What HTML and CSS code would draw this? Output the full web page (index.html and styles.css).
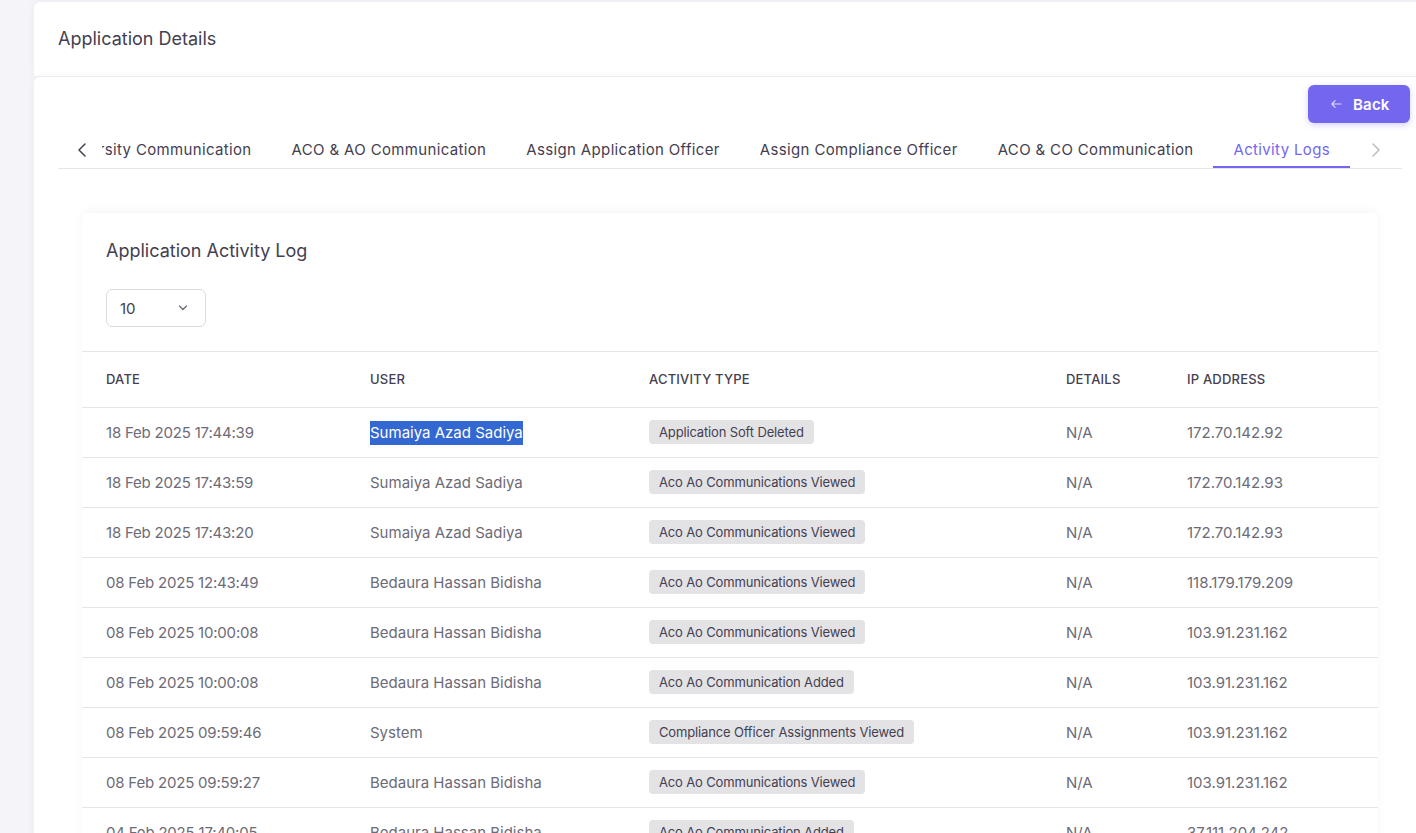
FILE: index.html
```html
<!DOCTYPE html>
<html lang="en">
<head>
<meta charset="utf-8">
<title>Application Details</title>
<link rel="stylesheet" href="styles.css">
</head>
<body>
<div class="page">
  <div class="card head-card">
    <h1 class="page-title">Application Details</h1>
  </div>
  <div class="card main-card">
    <div class="actions">
      <button class="btn-back" type="button">
        <svg class="back-ico" viewBox="0 0 14 12" width="14" height="12"><path d="M13 6H2M6 2L2 6l4 4" fill="none" stroke="currentColor" stroke-width="1.4" stroke-linecap="round" stroke-linejoin="round"/></svg>
        <span>Back</span>
      </button>
    </div>
    <div class="tabs">
      <button class="tab-arrow" type="button" aria-label="Previous">
        <svg viewBox="0 0 10 16" width="10" height="16"><path d="M8 2L2 8l6 6" fill="none" stroke="currentColor" stroke-width="1.5" stroke-linecap="round" stroke-linejoin="round"/></svg>
      </button>
      <div class="tab-scroll">
        <div class="tab">University Communication</div>
        <div class="tab">ACO &amp; AO Communication</div>
        <div class="tab">Assign Application Officer</div>
        <div class="tab">Assign Compliance Officer</div>
        <div class="tab">ACO &amp; CO Communication</div>
        <div class="tab active">Activity Logs</div>
      </div>
      <button class="tab-arrow disabled" type="button" aria-label="Next">
        <svg viewBox="0 0 10 16" width="10" height="16"><path d="M2 2l6 6-6 6" fill="none" stroke="currentColor" stroke-width="1.5" stroke-linecap="round" stroke-linejoin="round"/></svg>
      </button>
    </div>
    <div class="log-card">
      <h2 class="log-title">Application Activity Log</h2>
      <div class="select">
        <span>10</span>
        <svg viewBox="0 0 10 6" width="10" height="6"><path d="M1.5 1l3.5 3.5L8.5 1" fill="none" stroke="currentColor" stroke-width="1.3" stroke-linecap="round" stroke-linejoin="round"/></svg>
      </div>
      <table class="log-table">
        <thead>
          <tr><th class="c-date">Date</th><th class="c-user">User</th><th class="c-type">Activity Type</th><th class="c-det">Details</th><th class="c-ip">IP Address</th></tr>
        </thead>
        <tbody>
          <tr><td class="num">18 Feb 2025 17:44:39</td><td><span class="sel">Sumaiya Azad Sadiya</span></td><td><span class="badge">Application Soft Deleted</span></td><td>N/A</td><td>172.70.142.92</td></tr>
          <tr><td class="num">18 Feb 2025 17:43:59</td><td>Sumaiya Azad Sadiya</td><td><span class="badge">Aco Ao Communications Viewed</span></td><td>N/A</td><td>172.70.142.93</td></tr>
          <tr><td class="num">18 Feb 2025 17:43:20</td><td>Sumaiya Azad Sadiya</td><td><span class="badge">Aco Ao Communications Viewed</span></td><td>N/A</td><td>172.70.142.93</td></tr>
          <tr><td class="num">08 Feb 2025 12:43:49</td><td>Bedaura Hassan Bidisha</td><td><span class="badge">Aco Ao Communications Viewed</span></td><td>N/A</td><td>118.179.179.209</td></tr>
          <tr><td class="num">08 Feb 2025 10:00:08</td><td>Bedaura Hassan Bidisha</td><td><span class="badge">Aco Ao Communications Viewed</span></td><td>N/A</td><td>103.91.231.162</td></tr>
          <tr><td class="num">08 Feb 2025 10:00:08</td><td>Bedaura Hassan Bidisha</td><td><span class="badge">Aco Ao Communication Added</span></td><td>N/A</td><td>103.91.231.162</td></tr>
          <tr><td class="num">08 Feb 2025 09:59:46</td><td>System</td><td><span class="badge">Compliance Officer Assignments Viewed</span></td><td>N/A</td><td>103.91.231.162</td></tr>
          <tr><td class="num">08 Feb 2025 09:59:27</td><td>Bedaura Hassan Bidisha</td><td><span class="badge">Aco Ao Communications Viewed</span></td><td>N/A</td><td>103.91.231.162</td></tr>
          <tr><td class="num">04 Feb 2025 17:40:05</td><td>Bedaura Hassan Bidisha</td><td><span class="badge">Aco Ao Communication Added</span></td><td>N/A</td><td>37.111.204.242</td></tr>
        </tbody>
      </table>
    </div>
  </div>
</div>
</body>
</html>
```
FILE: styles.css
```css
* { box-sizing: border-box; }
html, body { margin: 0; height: 100%; overflow: hidden; }
body {
  background: #f5f5f9;
  font-family: "Inter", "Noto Sans", sans-serif;
  color: #444050;
}
.page {
  padding: 2px 0 0 34px;
  width: 1426px;
}
.card {
  background: #fff;
  border-radius: 6px;
  box-shadow: 0 0 8px rgba(47, 43, 61, 0.06);
}
.head-card {
  padding: 24px 24px;
  height: 74px;
  border-radius: 6px 6px 0 0;
}
.page-title {
  margin: 0;
  font-size: 18px;
  line-height: 26px;
  font-weight: 400;
  color: #444050;
}
.main-card {
  margin-top: 1px;
  padding: 8px 24px 0 24px;
  min-height: 900px;
}
.actions {
  display: flex;
  justify-content: flex-end;
  margin-right: -8px;
}
.btn-back {
  display: flex;
  align-items: center;
  gap: 11px;
  height: 38px;
  width: 102px;
  padding: 0 0 0 22px;
  border: 0;
  border-radius: 6px;
  background: #7367f0;
  color: #fff;
  font-family: inherit;
  font-size: 15px;
  font-weight: 600;
  letter-spacing: 0.2px;
  box-shadow: 0 2px 6px rgba(115, 103, 240, 0.3);
}
.back-ico { color: rgba(255,255,255,0.75); width: 12px; height: 10px; }
.tabs {
  display: flex;
  align-items: stretch;
  margin-top: 7px;
  width: 1344px;
  height: 39px;
  border-bottom: 1px solid #e6e6e8;
}
.tab-arrow {
  flex: 0 0 44px;
  display: flex;
  align-items: center;
  justify-content: center;
  border: 0;
  background: transparent;
  color: #444050;
  padding: 2px 4px 0 8px;
}
.tab-arrow.disabled { color: #bdbcc2; padding: 2px 0 0 0; flex-basis: 52px; }
.tab-scroll {
  flex: 1;
  display: flex;
  justify-content: flex-end;
  overflow: hidden;
}
.tab {
  flex-shrink: 0;
  display: flex;
  align-items: center;
  padding: 3px 20px 0;
  font-size: 15px;
  font-weight: 400;
  letter-spacing: 0.35px;
  color: #444050;
  white-space: nowrap;
  border-bottom: 2px solid transparent;
}
.tab.active {
  color: #7367f0;
  border-bottom-color: #7367f0;
}
.log-card {
  margin: 44px 24px 0 24px;
  width: 1296px;
  border-radius: 6px;
  box-shadow: 0 -3px 8px rgba(47, 43, 61, 0.04);
  background: #fff;
  padding-top: 24px;
}
.log-title {
  margin: 0 0 24px 24px;
  font-size: 18px;
  line-height: 28px;
  font-weight: 400;
  color: #444050;
}
.select {
  margin-left: 24px;
  width: 100px;
  height: 38px;
  border: 1px solid #dcdce0;
  border-radius: 6px;
  display: flex;
  align-items: center;
  justify-content: space-between;
  padding: 0 17px 0 13px;
  font-size: 15px;
  color: #444050;
}
.select svg { width: 10px; height: 6px; color: #6d6b77; margin-top: -1px; }
.log-table {
  margin-top: 24px;
  width: 100%;
  border-collapse: collapse;
  table-layout: fixed;
}
.log-table th, .log-table td {
  text-align: left;
  padding: 0 24px;
  border-top: 1px solid #e6e6e8;
  white-space: nowrap;
}
.log-table th {
  height: 56px;
  font-size: 13px;
  font-weight: 500;
  text-transform: uppercase;
  letter-spacing: 0.2px;
  color: #444050;
  padding-bottom: 1px;
}
.log-table td {
  height: 50px;
  font-size: 15px;
  color: #6d6b77;
  padding-bottom: 1px;
}
.log-table td.num { letter-spacing: -0.2px; }
.c-date { width: 264px; }
.c-user { width: 279px; }
.c-type { width: 417px; }
.c-det { width: 121px; }
.c-ip { width: 215px; }
.badge {
  display: inline-block;
  background: #e3e3e6;
  color: #444050;
  font-size: 13px;
  font-weight: 400;
  letter-spacing: -0.15px;
  line-height: 24px;
  padding: 0 10px;
  border-radius: 4px;
}
.sel {
  background: #3367d1;
  color: #fff;
  padding: 2px 0 3px;
}
```
